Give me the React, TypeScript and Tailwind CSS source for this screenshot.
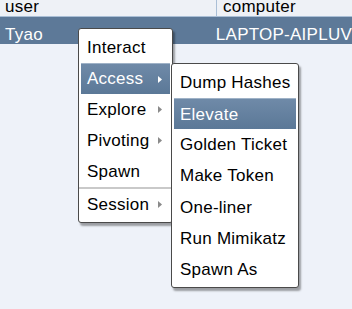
import React from "react";

const Arrow = () => (
  <svg width="4" height="7" viewBox="0 0 4 7">
    <path d="M0 0 L4 3.5 L0 7 Z" fill="currentColor" />
  </svg>
);

type Item = { label: string; sub?: boolean; active?: boolean; sepBefore?: boolean };

const Menu = ({ items, className, itemH }: { items: Item[]; className: string; itemH: string }) => (
  <div
    className={
      "absolute bg-white border border-[#4a4a4a] rounded-[3px] pt-[3px] pb-[2px] px-[2px] shadow-[2px_3px_2px_rgba(0,0,0,0.35)] " +
      className
    }
  >
    {items.map((it) => (
      <React.Fragment key={it.label}>
        {it.sepBefore && <div className="h-[2px] bg-[#c9c9c9] mx-[-2px]" />}
        <div
          className={
            itemH +
            " flex items-center pl-[6px] pr-[8px] whitespace-nowrap " +
            (it.active
              ? "bg-gradient-to-b from-[#6f8aa8] to-[#5b7897] text-white border-t border-[#9fb2c7]"
              : "text-black")
          }
        >
          <span>{it.label}</span>
          {it.sub && (
            <span className={"ml-auto flex " + (it.active ? "text-white" : "text-[#8a8a8a]")}>
              <Arrow />
            </span>
          )}
        </div>
      </React.Fragment>
    ))}
  </div>
);

export default function App() {
  return (
    <div
      className="relative w-[352px] h-[309px] overflow-hidden bg-[#eef2f9] text-[17px]"
      style={{ fontFamily: '"Liberation Sans", Arial, sans-serif', letterSpacing: "0.25px" }}
    >
      <div className="flex h-[17px] bg-[#eef1f6] border-b border-[#aabfd6] leading-[15px] whitespace-nowrap">
        <div className="w-[217px] border-r border-[#aabfd6] pl-[5px] -mt-[1px]">user</div>
        <div className="pl-[6px] -mt-[1px]">computer</div>
      </div>
      <div className="flex h-[27px] items-end leading-[18px] bg-[#5d7998] text-white whitespace-nowrap">
        <div className="w-[217px] pl-[5px]">Tyao</div>
        <div className="pl-[6px]">LAPTOP-AIPLUV</div>
      </div>

      <Menu
        className="left-[78px] top-[28px] w-[95px]"
        itemH="h-[31px]"
        items={[
          { label: "Interact" },
          { label: "Access", sub: true, active: true },
          { label: "Explore", sub: true },
          { label: "Pivoting", sub: true },
          { label: "Spawn" },
          { label: "Session", sub: true, sepBefore: true },
        ]}
      />
      <Menu
        className="left-[171px] top-[63px] w-[128px]"
        itemH="h-[31.2px]"
        items={[
          { label: "Dump Hashes" },
          { label: "Elevate", active: true },
          { label: "Golden Ticket" },
          { label: "Make Token" },
          { label: "One-liner" },
          { label: "Run Mimikatz" },
          { label: "Spawn As" },
        ]}
      />
    </div>
  );
}
